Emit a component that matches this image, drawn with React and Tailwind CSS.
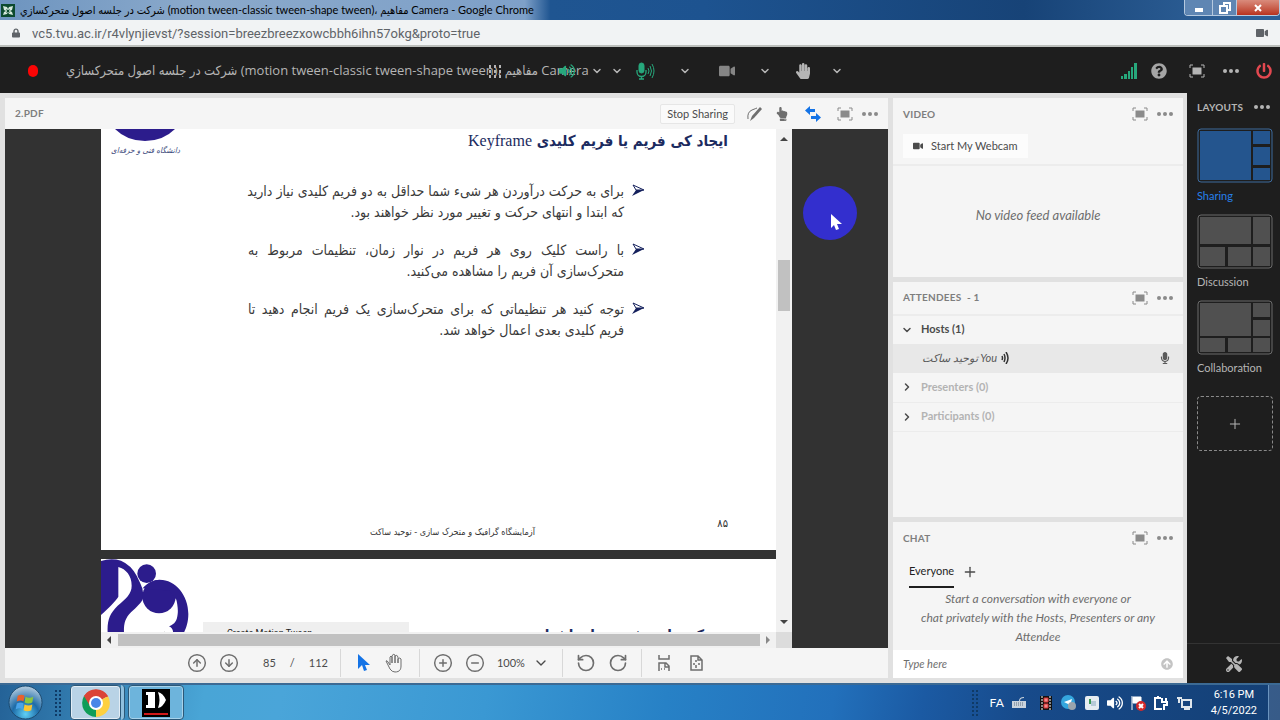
import { ChevronDown, ChevronRight, Plus, CirclePlus, CircleMinus, CircleArrowUp, CircleArrowDown, RotateCcw, RotateCw } from "lucide-react";
import { FaQuestionCircle, FaVideo, FaLock, FaHandPaper, FaMicrophone, FaVolumeUp, FaHandPointUp, FaTools, FaPowerOff, FaArrowCircleUp } from "react-icons/fa";

const meetingTitle = "شركت در جلسه اصول متحركسازي (motion tween-classic tween-shape tween)، مفاهیم Camera";

const bullets = [
  {
    first: "برای به حرکت درآوردن هر شیء شما حداقل به دو فریم کلیدی نیاز دارید",
    last: "که ابتدا و انتهای حرکت و تغییر مورد نظر خواهند بود.",
  },
  {
    first: "با راست کلیک روی هر فریم در نوار زمان، تنظیمات مربوط به",
    last: "متحرک‌سازی آن فریم را مشاهده می‌کنید.",
  },
  {
    first: "توجه کنید هر تنظیماتی که برای متحرک‌سازی یک فریم انجام دهید تا",
    last: "فریم کلیدی بعدی اعمال خواهد شد.",
  },
];

const layouts = [
  { name: "Sharing", active: true, cells: [[0, 0, 51, 49], [53, 0, 17, 13], [53, 16, 17, 18], [53, 37, 17, 12]] },
  { name: "Discussion", active: false, cells: [[0, 0, 51, 27], [53, 0, 17, 27], [0, 30, 25, 19], [28, 30, 23, 19], [53, 30, 17, 19]] },
  { name: "Collaboration", active: false, cells: [[0, 0, 51, 33], [53, 0, 17, 14], [53, 17, 17, 16], [0, 35, 25, 14], [28, 35, 23, 14], [53, 35, 17, 14]] },
];

function FullscreenIcon() {
  return (
    <svg className="h-4 w-4" viewBox="0 0 16 16" fill="none" stroke="currentColor">
      <path d="M1 5V2h3M12 2h3v3M15 11v3h-3M4 14H1v-3" />
      <rect x="4" y="5" width="8" height="6" fill="currentColor" />
    </svg>
  );
}

function DotsIcon() {
  return (
    <svg className="h-1 w-4" viewBox="0 0 16 4" fill="currentColor">
      <circle cx="2" cy="2" r="2" />
      <circle cx="8" cy="2" r="2" />
      <circle cx="14" cy="2" r="2" />
    </svg>
  );
}

function PodActions({ name }) {
  return (
    <div className="flex items-center gap-[9px] text-[#8a8a8a]">
      <button aria-label={`Maximize ${name}`}><FullscreenIcon /></button>
      <button aria-label={`${name} options`} className="flex h-4 items-center"><DotsIcon /></button>
    </div>
  );
}

function Chevron({ label }) {
  return (
    <button aria-label={label} className="text-[#b5b5b5]">
      <ChevronDown className="h-3 w-3" strokeWidth={3} />
    </button>
  );
}

function TitleBar() {
  return (
    <div className="flex h-5 shrink-0 items-start justify-between bg-[linear-gradient(90deg,#6d94bf,#8aa9cb_15%,#7ea0c8_41%,#1f5591_43%,#1d5390_55%,#174377_80%,#2d5f96_95%)]">
      <div className="flex h-5 min-w-0 items-center gap-1 text-black">
        <svg className="h-4 w-4 shrink-0" viewBox="0 0 16 16">
          <path d="M1 2h14v13H1z" fill="#0c4a2e" />
          <path d="M3 4l4 1 1 2 1-2 4-1-1 4-2 1 2 1 1 3-4-1-1-2-1 2-4 1 1-3 2-1-2-1z" fill="#d5e8dc" />
          <path d="M6 7l2 1 2-1-1 2 1 2-2-1-2 1 1-2z" fill="#0c4a2e" />
        </svg>
        <p className="truncate text-[11px]">{meetingTitle} - Google Chrome</p>
      </div>
      <div className="flex h-4 w-24 shrink-0 overflow-hidden rounded-b-sm border border-t-0 border-[#b5c9df] text-white">
        <button aria-label="Minimize" className="flex w-7 items-center justify-center border-r border-[#b5c9df] bg-[#5f86b3]">
          <span className="mt-1 h-1 w-2 bg-white" />
        </button>
        <button aria-label="Restore" className="flex w-6 items-center justify-center border-r border-[#b5c9df] bg-[#5f86b3]">
          <svg className="h-3 w-3" viewBox="0 0 12 12" fill="none" stroke="white" strokeWidth="2">
            <path d="M5 3V1h6v7H9M1 4h7v7H1z" />
          </svg>
        </button>
        <button aria-label="Close" className="flex flex-1 items-center justify-center bg-linear-to-b from-[#d98b7c] to-[#b8311d]">
          <svg className="h-2 w-2" viewBox="0 0 8 8" stroke="white" strokeWidth="2">
            <path d="M1 1l6 6M7 1L1 7" />
          </svg>
        </button>
      </div>
    </div>
  );
}

function AddressBar() {
  return (
    <div className="flex h-[27px] shrink-0 items-center border-b-2 border-[#bcbfbc] bg-[#f1f3f4] px-3 text-[#5f6368]">
      <FaLock className="h-3 w-2" />
      <input
        aria-label="Address"
        readOnly
        defaultValue="vc5.tvu.ac.ir/r4vlynjievst/?session=breezbreezxowcbbh6ihn57okg&proto=true"
        className="ml-3 min-w-0 flex-1 bg-transparent pt-[2px] font-['Roboto',sans-serif] text-[13px] outline-none"
      />
      <FaVideo className="h-3 w-3" />
    </div>
  );
}

function MeetingBar() {
  return (
    <header className="relative flex h-[46px] shrink-0 items-center justify-between bg-[#1e1e1e] pt-[2px] pr-2 pl-7 text-[#b5b5b5]">
      <div className="flex min-w-0 items-center">
        <span className="h-3 w-[10px] shrink-0 rounded-full bg-[#fb0505]" />
        <h1 className="ml-7 truncate font-['Open_Sans','DejaVu_Sans_Condensed','DejaVu_Sans',sans-serif] text-[13px]">{meetingTitle}</h1>
        <ChevronDown className="ml-[2px] h-3 w-3 shrink-0" strokeWidth={3} />
      </div>
      <div className="absolute left-[38%] flex items-center pl-px">
        <svg className="h-4 w-4" viewBox="0 0 16 16" fill="#b5b5b5">
          {[2, 7, 12].map((y) => [2, 7, 12].map((x) => <rect key={`${x}-${y}`} x={x} y={y} width="2" height="3" />))}
        </svg>
        <div className="ml-14 flex items-center gap-9">
          <button aria-label="Speaker" className="text-[#27a87c]"><FaVolumeUp className="h-4 w-4" /></button>
          <Chevron label="Speaker options" />
        </div>
        <div className="ml-3 flex items-center gap-6">
          <button aria-label="Microphone" className="flex items-center text-[#27a87c]">
            <svg className="h-5 w-5" viewBox="0 0 20 20" fill="none" stroke="currentColor">
              <rect x="4" y="2" width="5" height="10" rx="2.5" fill="currentColor" />
              <path d="M2 9v2a4 4 0 009 0V9M6.500 15v3M4 18h5" strokeWidth="1.300" />
              <path d="M13 7q2 3 0 6M15 5q3 5 0 10M17 3q4 7 0 14" />
            </svg>
          </button>
          <Chevron label="Microphone options" />
        </div>
        <div className="ml-7 flex items-center gap-6">
          <button aria-label="Camera" className="text-[#858585]"><FaVideo className="h-4 w-4" /></button>
          <Chevron label="Camera options" />
        </div>
        <div className="ml-6 flex items-center gap-5">
          <button aria-label="Raise hand"><FaHandPaper className="h-4 w-4" /></button>
          <Chevron label="Status options" />
        </div>
      </div>
      <div className="flex shrink-0 items-center">
        <svg className="h-4 w-4 text-[#27a87c]" viewBox="0 0 16 16" fill="currentColor">
          <path d="M0 13h2v3H0zM3 11h3v5H3zM7 8h2v8H7zM10 4h2v12h-2zM13 0h3v16h-3z" />
        </svg>
        <button aria-label="Help" className="ml-[14px] text-[#a5a5a5]"><FaQuestionCircle className="h-4 w-4" /></button>
        <button aria-label="Full screen" className="ml-[22px]"><FullscreenIcon /></button>
        <button aria-label="More" className="ml-[18px]"><DotsIcon /></button>
        <button aria-label="Leave meeting" className="ml-[17px] text-[#e34850]"><FaPowerOff className="h-4 w-4" /></button>
      </div>
    </header>
  );
}

function UniversityLogo() {
  return (
    <svg className="h-[74px] w-22 shrink-0" viewBox="0 0 264 222" fill="#2c1c8c">
      <path d="M0 6Q30-4 60 5Q90 18 107 50C116 68 122 82 124 88L128 113C124 130 105 145 90 160C72 178 68 195 69 222H20C18 185 25 165 50 140C75 118 92 105 92 80C92 50 75 30 52 24V113C45 125 20 150 0 168Z" />
      <circle cx="137" cy="44" r="28" />
      <circle cx="174" cy="113" r="50" />
      <path d="M125 88C140 70 160 62 175 62C225 62 262 110 262 165C262 190 255 210 248 222H216C218 212 210 205 204 202C222 195 228 185 230 165C232 150 228 130 226 122L205 95Z" />
      <path d="M185 222l6-4 5 4z" fill="#222" />
    </svg>
  );
}

function SlideBullet({ first, last }) {
  return (
    <li className="flex gap-2">
      <svg className="mt-[3px] h-3 w-3 shrink-0" viewBox="0 0 12 12">
        <path d="M12 6L0 12l4-6z" fill="#14205c" />
        <path d="M12 6L1 1l3 5z" fill="none" stroke="#14205c" />
      </svg>
      <p className="flex-1">
        <span className="block whitespace-nowrap [text-align-last:justify]">{first}</span>
        <span className="block">{last}</span>
      </p>
    </li>
  );
}

function PdfViewer() {
  return (
    <div className="flex min-h-0 flex-1 justify-center bg-[#323232] px-24 font-['DejaVu_Sans_Condensed','DejaVu_Sans',sans-serif]">
      <div className="flex min-h-0 w-full flex-col">
        <div className="flex min-h-0 flex-1">
          <div className="min-w-0 flex-1 overflow-hidden">
            <article dir="rtl" className="relative h-[421px] bg-white">
              <div className="flex items-start justify-between pr-12 pl-[10px]">
                <h2 className="text-[15px] leading-6 font-bold text-[#1c2b60]">
                  ایجاد کی فریم یا فریم کلیدی <span className="font-['Liberation_Serif',serif] text-base font-normal">Keyframe</span>
                </h2>
                <div className="flex flex-col items-center text-[#3d4a7c]">
                  <svg className="h-3 w-15" viewBox="0 0 60 12">
                    <path d="M0 0h60Q48 12 30 12T0 0z" fill="#2c1c8c" />
                  </svg>
                  <span className="text-[8px] leading-5 italic">دانشگاه فنی و حرفه‌ای</span>
                </div>
              </div>
              <ul className="mt-5 mr-33 ml-[147px] flex flex-col gap-[17px] text-sm leading-[21px] text-[#3a3a3a]">
                {bullets.map((b) => <SlideBullet key={b.first} {...b} />)}
              </ul>
              <footer className="absolute inset-x-0 bottom-2 pr-9 pl-16 text-center text-[9px] leading-5 text-[#333]">
                <span className="absolute right-12 bottom-2 text-[11px]">۸۵</span>
                آزمایشگاه گرافیک و متحرک سازی - توحید ساکت
              </footer>
            </article>
            <article className="mt-[9px] flex h-[421px] items-start bg-white">
              <UniversityLogo />
              <div className="mt-[63px] ml-[14px] w-[206px] shrink-0 bg-[#efefef] px-6 py-1 font-['Roboto',sans-serif] text-[9px] leading-[14px] text-[#222]">Create Motion Tween</div>
              <h2 dir="rtl" className="mt-[66px] mr-10 flex-1 text-[15px] leading-5 font-bold text-[#1c2b60]">متحرک سازی فریم های اشیا</h2>
            </article>
          </div>
          <div className="relative flex w-4 shrink-0 flex-col items-center justify-between bg-[#f1f1f1] py-2">
            <svg className="h-1 w-2" viewBox="0 0 8 4"><path d="M0 4l4-4 4 4z" fill="#444" /></svg>
            <div className="absolute inset-x-[2px] top-[26%] h-[51px] bg-[#c1c1c1]" />
            <svg className="h-1 w-2" viewBox="0 0 8 4"><path d="M0 0l4 4 4-4z" fill="#444" /></svg>
          </div>
        </div>
        <div className="flex h-4 shrink-0 items-center bg-[#f1f1f1] pl-1">
          <svg className="ml-[2px] h-2 w-1" viewBox="0 0 4 8"><path d="M4 0L0 4l4 4z" fill="#444" /></svg>
          <div className="ml-[7px] h-3 flex-1 bg-[#c1c1c1]" />
          <svg className="mx-[6px] h-2 w-1" viewBox="0 0 4 8"><path d="M0 0l4 4-4 4z" fill="#888" /></svg>
          <div className="h-4 w-4 bg-[#dcdcdc]" />
        </div>
      </div>
    </div>
  );
}

function PdfToolbar() {
  return (
    <div className="flex h-[30px] shrink-0 items-center pl-[182px] text-[#6e6e6e]">
      <div className="flex items-center gap-3">
        <button aria-label="Previous page"><CircleArrowUp className="h-5 w-5" strokeWidth={1.75} /></button>
        <button aria-label="Next page"><CircleArrowDown className="h-5 w-5" strokeWidth={1.75} /></button>
      </div>
      <p className="ml-6 flex gap-[14px] text-[11px] text-[#4b4b4b]"><span>85</span><span>/</span><span>112</span></p>
      <div className="ml-3 flex h-7 items-center gap-[14px] border-x border-[#d8d8d8] px-[14px]">
        <button aria-label="Pointer" className="text-[#1473e6]">
          <svg className="h-5 w-4" viewBox="0 0 16 20" fill="currentColor">
            <path d="M3 1v15l4-4 2 6 3-1-2-5h5z" />
          </svg>
        </button>
        <button aria-label="Hand">
          <svg className="h-5 w-5" viewBox="0 0 20 20" fill="none" stroke="currentColor" strokeLinejoin="round">
            <path d="M5 12L3 9q-1-2-2-1l4 8q2 3 5 3c5 0 6-3 6-6V6q-1-2-3 0v4V4q-1-3-3-1v7V2q-2-2-3 1v7V4Q6 2 5 4z" />
          </svg>
        </button>
      </div>
      <div className="flex h-7 items-center gap-3 border-r border-[#d8d8d8] px-[13px]">
        <button aria-label="Zoom in"><CirclePlus className="h-5 w-5" strokeWidth={1.75} /></button>
        <button aria-label="Zoom out"><CircleMinus className="h-5 w-5" strokeWidth={1.75} /></button>
        <button className="flex items-center gap-2 text-[11px] text-[#4b4b4b]">100%<ChevronDown className="h-4 w-4" /></button>
      </div>
      <div className="flex h-7 items-center gap-3 border-r border-[#d8d8d8] px-[13px]">
        <button aria-label="Rotate left"><RotateCcw className="h-5 w-5" /></button>
        <button aria-label="Rotate right"><RotateCw className="h-5 w-5" /></button>
      </div>
      <div className="ml-[14px] flex items-center gap-4">
        <button aria-label="Fit width">
          <svg className="h-4 w-4" viewBox="0 0 16 16" fill="none" stroke="currentColor" strokeWidth="1.500">
            <path d="M3 0v4h10V0M3 16V8h7l3 3v5M9 8v4h4M5 14h1M8 14h1" />
          </svg>
        </button>
        <button aria-label="Fit page">
          <svg className="h-4 w-4" viewBox="0 0 16 16" fill="none" stroke="currentColor" strokeWidth="1.500">
            <path d="M3 1h7l4 4v10H3zM10 1v4h4M8 5v2M8 10v3M5 9h2M10 9h2" />
          </svg>
        </button>
      </div>
    </div>
  );
}

function SharePod() {
  return (
    <section className="relative flex min-w-0 flex-1 flex-col bg-[#f5f5f5]">
      <div className="flex h-[31px] shrink-0 items-center justify-between px-[10px]">
        <h2 className="text-[10px] font-bold tracking-wide text-[#7e7e7e]">2.PDF</h2>
        <div className="flex items-center gap-3 text-[#6e6e6e]">
          <button className="h-5 rounded-xs border border-[#e6e6e6] bg-[#fafafa] px-[6px] text-[11px] leading-4 text-[#4b4b4b]">Stop Sharing</button>
          <button aria-label="Draw">
            <svg className="h-4 w-4" viewBox="0 0 16 16">
              <path d="M1 13Q0 6 5 4T10 2" fill="none" stroke="currentColor" />
              <path d="M3 15l2-5 8-9 2 2-8 9z" fill="currentColor" />
            </svg>
          </button>
          <button aria-label="Pointer"><FaHandPointUp className="h-[14px] w-[14px]" /></button>
          <button aria-label="Sync" className="mx-1 text-[#1473e6]">
            <svg className="h-4 w-4" viewBox="0 0 16 16" fill="currentColor">
              <path d="M5 0v3h5v3H5v3L0 4.500zM11 7v3H6v3h5v3l5-4.500z" />
            </svg>
          </button>
          <PodActions name="Share" />
        </div>
      </div>
      <PdfViewer />
      <PdfToolbar />
      <div className="absolute top-[88px] right-[31px] h-[54px] w-[54px] rounded-full bg-[#332fce]">
        <svg className="absolute top-7 left-7 h-4 w-3" viewBox="0 0 12 16">
          <path d="M0 0v14l3-3 2 5 3-1-2-5h5z" fill="white" />
        </svg>
      </div>
    </section>
  );
}

function PodTitle({ children, name }) {
  return (
    <div className="flex h-8 shrink-0 items-center justify-between px-[10px]">
      <h2 className="text-[10px] font-bold tracking-wide text-[#7e7e7e]">{children}</h2>
      <PodActions name={name} />
    </div>
  );
}

function VideoPod() {
  return (
    <section className="flex min-h-0 flex-[179] flex-col bg-[#f5f5f5]">
      <PodTitle name="Video">VIDEO</PodTitle>
      <div className="shrink-0 border-b-2 border-[#ececec] px-[10px] pt-1 pb-[6px]">
        <button className="flex h-6 items-center gap-2 bg-[#fcfcfc] px-[10px] text-[11px] text-[#4b4b4b]">
          <FaVideo className="h-[10px] w-[10px]" />Start My Webcam
        </button>
      </div>
      <p className="flex flex-1 items-center justify-center pb-3 text-[13px] text-[#6e6e6e] italic">No video feed available</p>
    </section>
  );
}

function AttendeesPod() {
  return (
    <section className="flex min-h-0 flex-[236] flex-col bg-[#f5f5f5]">
      <PodTitle name="Attendees">ATTENDEES &nbsp;- 1</PodTitle>
      <ul className="border-t-2 border-[#ececec] text-[11px] font-bold">
        <li className="flex h-7 items-center gap-2 px-2 text-[#4b4b4b]">
          <ChevronDown className="h-3 w-3" strokeWidth={3} />Hosts (1)
        </li>
        <li className="flex h-[29px] items-center bg-[#e8e8e8] pr-3 pl-[29px] font-normal text-[#5a5a5a]">
          <span dir="ltr" className="font-['Lato','DejaVu_Sans',sans-serif] italic">توحید ساکت You</span>
          <svg className="ml-1 h-3 w-2" viewBox="0 0 8 12" fill="none" stroke="#333" strokeWidth="1.500">
            <path d="M1 4q1 2 0 4M3 2q2 4 0 8M5 0q4 6 0 12" />
          </svg>
          <FaMicrophone className="ml-auto h-3 w-3" />
        </li>
        <li className="flex h-[30px] items-center gap-2 border-b border-[#ececec] px-2 text-[#b3b3b3]">
          <ChevronRight className="h-3 w-3 text-[#4b4b4b]" strokeWidth={3} />Presenters (0)
        </li>
        <li className="flex h-[29px] items-center gap-2 border-b border-[#ececec] px-2 text-[#b3b3b3]">
          <ChevronRight className="h-3 w-3 text-[#4b4b4b]" strokeWidth={3} />Participants (0)
        </li>
      </ul>
    </section>
  );
}

function ChatPod() {
  return (
    <section className="flex min-h-0 flex-[156] flex-col bg-[#f5f5f5]">
      <PodTitle name="Chat">CHAT</PodTitle>
      <div className="mx-4 mt-[2px] flex h-8 shrink-0 items-stretch gap-2 text-[#4b4b4b]">
        <button className="border-b-2 border-[#1e1e1e] text-[11px] text-[#1e1e1e]">Everyone</button>
        <button aria-label="New chat"><Plus className="h-4 w-4" /></button>
      </div>
      <p className="mx-auto flex-1 pt-px text-center text-xs leading-[19px] text-[#6e6e6e] italic">
        Start a conversation with everyone or<br />chat privately with the Hosts, Presenters or any<br />Attendee
      </p>
      <div className="flex h-7 shrink-0 items-center bg-white px-[10px]">
        <input aria-label="Message" placeholder="Type here" className="min-w-0 flex-1 text-[11px] outline-none placeholder:text-[#6e6e6e] placeholder:italic" />
        <button aria-label="Send" className="text-[#c4c4c4]"><FaArrowCircleUp className="h-3 w-3" /></button>
      </div>
    </section>
  );
}

function LayoutBar() {
  return (
    <aside className="flex w-[93px] shrink-0 flex-col bg-[#1e1e1e] text-[#b5b5b5]">
      <div className="flex h-7 items-center justify-between px-[10px]">
        <h2 className="text-[10px] font-bold tracking-wide">LAYOUTS</h2>
        <button aria-label="Layout options"><DotsIcon /></button>
      </div>
      <div className="mt-[7px] flex flex-col gap-[10px] pl-[10px]">
        {layouts.map((item) => (
          <button key={item.name} className="flex flex-col items-start">
            <svg className={item.active ? "h-[55px] w-19 text-[#24558e]" : "h-[55px] w-19 text-[#505050]"} viewBox="0 0 76 55" fill="currentColor">
              <rect x="1" y="1" width="74" height="53" rx="3" fill="none" stroke={item.active ? "#3d6a9c" : "#6a6a6a"} />
              {item.cells.map(([x, y, w, h]) => <rect key={`${x}-${y}`} x={x + 3} y={y + 3} width={w} height={h} />)}
            </svg>
            <span className={item.active ? "mt-1 text-[11px] leading-[17px] text-[#2680eb]" : "mt-1 text-[11px] leading-[17px]"}>{item.name}</span>
          </button>
        ))}
        <button aria-label="Add layout" className="mt-[10px] flex h-[55px] w-19 items-center justify-center rounded-sm border border-dashed border-[#8a8a8a]">
          <Plus className="h-4 w-4" strokeWidth={1.5} />
        </button>
      </div>
      <button aria-label="Tools" className="mt-auto flex h-10 items-center justify-center border-t border-[#333]">
        <FaTools className="h-4 w-4" />
      </button>
    </aside>
  );
}

function ToolbarGrip() {
  return <div className="h-7 w-2 shrink-0 bg-[radial-gradient(#0f3a66_1px,transparent_1px)] bg-[size:4px_4px]" />;
}

function Taskbar() {
  return (
    <footer className="flex h-[37px] shrink-0 items-center border-t-2 border-[#3c6a94] bg-[linear-gradient(100deg,#246297,#49a5d6_16%,#4aa5d9_22%,#3a98d3_38%,#2781c6_52%,#2270bb_65%,#1b5aa3_72%,#174a8a_80%,#143f74)] text-white">
      <button aria-label="Start" className="ml-2 shrink-0">
        <svg className="h-[35px] w-[35px]" viewBox="0 0 36 36">
          <defs>
            <radialGradient id="orb" cx="50%" cy="85%" r="80%">
              <stop offset="0" stopColor="#5fd0f5" />
              <stop offset="0.5" stopColor="#1d6ba8" />
              <stop offset="1" stopColor="#a8c4da" />
            </radialGradient>
          </defs>
          <circle cx="18" cy="18" r="17" fill="url(#orb)" stroke="#1c4a70" />
          <path d="M10 11q4-2 7 0l-1 6q-3-2-7 0z" fill="#e8612c" />
          <path d="M18 12q4 2 8 0l-1 6q-4 2-8 0z" fill="#8cc63f" />
          <path d="M9 19q4-2 7 0l-1 6q-3-2-7 0z" fill="#4aa3e8" />
          <path d="M17 20q4 2 8 0l-1 6q-4 2-8 0z" fill="#fbc531" />
        </svg>
      </button>
      <div className="ml-[11px]"><ToolbarGrip /></div>
      <button aria-label="Google Chrome" className="ml-2 flex h-[35px] w-[51px] items-center justify-center rounded-sm border border-[#2b5878] bg-[#b9d3e6] ring-1 ring-white/60 ring-inset">
        <svg className="h-7 w-7" viewBox="0 0 28 28">
          <path d="M14 14L2 7A14 14 0 0126 7z" fill="#db4437" />
          <path d="M14 14L26 7a14 14 0 01-12 21z" fill="#fdd03f" />
          <path d="M14 14l0 14A14 14 0 012 7z" fill="#0f9d58" />
          <path d="M14 8h12a14 14 0 00-24-1l6 10z" fill="#db4437" />
          <circle cx="14" cy="14" r="7" fill="white" />
          <circle cx="14" cy="14" r="5" fill="#4a86e8" />
        </svg>
      </button>
      <div className="h-[35px] w-1 rounded-r-sm border-r border-[#2b5878] bg-[#8fc0de]" />
      <button aria-label="D" className="ml-[3px] flex h-[35px] w-14 items-center justify-center rounded-sm border border-[#2b5878] bg-[#6db4dc] ring-1 ring-white/40 ring-inset">
        <span className="flex h-7 w-7 flex-col items-center justify-between bg-black pb-[2px]">
          <svg className="h-[22px] w-6" viewBox="0 0 24 22" fill="white">
            <path d="M2 3h9v16H2v-3h2V6H2zM14 3q5 1 8 8-3 7-8 8 3-8 0-16z" />
          </svg>
          <span className="h-[2px] w-6 bg-[#d01818]" />
        </span>
      </button>
      <div className="ml-auto flex items-center gap-[7px]">
        <ToolbarGrip />
        <span className="ml-1 text-xs">FA</span>
        <svg className="h-4 w-4" viewBox="0 0 16 16" fill="#c9d3dd"><path d="M1 6h14v7H1zM8 6q0-4 5-4v1q-4 0-4 3z" /><path d="M3 8h10M3 10h10" stroke="#5d6f80" strokeDasharray="1 1" /></svg>
        <svg className="ml-1 h-4 w-4" viewBox="0 0 16 16"><path d="M2 1h12v14H2z" fill="#111" /><path d="M4 1v14M12 1v14" stroke="white" strokeDasharray="2 1" /><path d="M6 3h4v4H6zM6 9h4v4H6z" fill="#e88" stroke="#d33" /></svg>
        <svg className="h-4 w-4" viewBox="0 0 16 16"><circle cx="7" cy="7" r="7" fill="#35a6de" /><path d="M3 7l8-3-2 7-2-2z" fill="white" /><circle cx="11" cy="11" r="4" fill="#9aa5ad" /></svg>
        <svg className="h-4 w-4" viewBox="0 0 16 16"><rect x="1" y="1" width="14" height="14" rx="2" fill="#e7edf1" /><path d="M5 4h2v5H5z" fill="#3c9a55" /><path d="M7 6h5v5H7z" fill="#b8cbd8" /></svg>
        <FaVolumeUp className="h-4 w-4" />
        <svg className="h-4 w-4" viewBox="0 0 16 16"><path d="M2 1v14M3 2h8v6H3z" fill="white" stroke="white" /><circle cx="11" cy="11" r="5" fill="#d42a2a" /><path d="M9 9l4 4M13 9l-4 4" stroke="white" strokeWidth="2" /></svg>
        <svg className="h-4 w-4" viewBox="0 0 16 16" fill="none" stroke="white" strokeWidth="2"><path d="M9 14H2V3h6M5 1v2M9 3v4M13 3v4M8 7h6v3h-3v5" /></svg>
        <svg className="h-4 w-4" viewBox="0 0 16 16" fill="none" stroke="#dfe6ec" strokeWidth="2"><path d="M6 5h9v7H6zM3 2v6M1 3h5M8 14h6" /></svg>
        <time className="ml-3 text-center font-['Roboto',sans-serif] text-[11px] leading-4">6:16 PM<br />4/5/2022</time>
        <button aria-label="Show desktop" className="ml-1 h-[35px] w-3 border-l border-[#6b94be] bg-white/15" />
      </div>
    </footer>
  );
}

function App() {
  return (
    <div className="flex h-screen flex-col overflow-hidden bg-[#e1e1e1] font-['Lato','DejaVu_Sans_Condensed','DejaVu_Sans',sans-serif]">
      <TitleBar />
      <AddressBar />
      <MeetingBar />
      <div className="flex min-h-0 flex-1">
        <main className="flex min-w-0 flex-1 gap-[5px] pt-[5px] pr-1 pb-[5px] pl-[5px]">
          <SharePod />
          <div className="flex w-[290px] shrink-0 flex-col gap-[5px]">
            <VideoPod />
            <AttendeesPod />
            <ChatPod />
          </div>
        </main>
        <LayoutBar />
      </div>
      <Taskbar />
    </div>
  );
}

export default App;
